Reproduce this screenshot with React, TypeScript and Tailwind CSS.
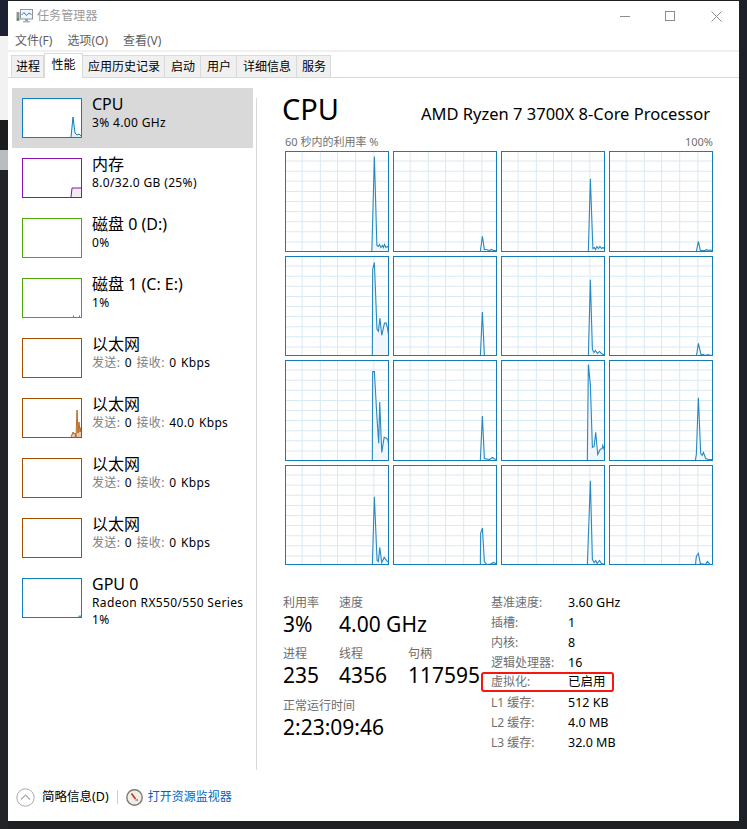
const FONT = '"Noto Sans", "Noto Sans CJK SC", sans-serif';

type P = [number, number];

const CORES: P[][] = [
  [[86.5,100],[89,6],[91.5,94],[93,95],[94,93],[95.5,96],[97,94],[98,96],[99,93],[100.5,96],[102,95],[104,97]],
  [[87,100],[89,85],[91,98],[93,98],[96,99],[98,98],[100,99],[104,99]],
  [[87,100],[89,28],[91.5,97],[93,96],[94,98],[95.5,95],[97,97],[98.5,95],[100,97],[101.5,96],[104,98]],
  [[87,100],[89,90],[91,99],[94,99],[96,99],[97,98],[99,99],[101,98.5],[104,99]],
  [[87,100],[87.3,14],[89,7],[91.6,73],[93,75],[94.5,62],[96.3,79],[99,67],[100.7,67],[102,72],[104,84]],
  [[87,100],[89,56],[91,99],[93,99],[104,99]],
  [[87,100],[89,24],[91,93],[92.5,96],[94,94],[96,97],[98,95],[100,97],[102,98],[104,99]],
  [[87,100],[89,87],[91.6,98],[94,98],[96,99],[98,98],[100,98.5],[104,99]],
  [[87,100],[87.3,12],[89,12],[91.6,58],[93.3,83],[94.3,42],[96.3,92],[98.7,77],[101,78],[102.5,80],[104,92]],
  [[87,100],[89,56],[91,98],[96,99],[99,97],[101,98.5],[104,99]],
  [[86,100],[87,5],[89,25],[91,87],[92.7,86],[94.3,72],[96.3,94],[98.7,89],[100.7,88],[101.3,85],[104,93]],
  [[86,100],[87,94],[89,38],[91.3,93],[92.7,95],[94,92],[96.3,98],[99,99],[104,99]],
  [[87,100],[89,32],[91.7,95],[93,96],[94.3,82],[96.3,97],[98.7,92],[101,95],[104,98]],
  [[87,100],[87.3,68],[89,63],[91,96],[93.3,99],[97,98.5],[100,97],[104,99]],
  [[86,100],[89,16],[91,94],[92.7,97],[94.3,95],[95.7,98],[98,95],[100,98],[104,99]],
  [[86,100],[87,91],[89,88],[91,98],[96,99],[98,96],[100.7,99],[104,99]],
];

const VLINES = [17.5, 35.5, 52.5, 70.5, 88.5];
const HLINES = [10.5, 20.5, 30.5, 40.5, 50.5, 60.5, 70.5, 80.5, 90.5];

function CoreGraph({ pts }: { pts: P[] }) {
  const line = pts.map((p) => p.join(",")).join(" ");
  return (
    <div className="border-[1.5px] border-[#117dbb] bg-white overflow-hidden">
      <svg viewBox="1.5 1.5 101 97.5" preserveAspectRatio="none" className="block w-full h-full">
        {VLINES.map((x) => (
          <line key={x} x1={x} x2={x} y1={0} y2={100} stroke="#d9eaf4" strokeWidth={1} />
        ))}
        {HLINES.map((y) => (
          <line key={y} x1={0} x2={104} y1={y} y2={y} stroke="#d9eaf4" strokeWidth={1} />
        ))}
        <polygon points={`${line} 104,100`} fill="#f1f6fa" />
        <polyline points={line} fill="none" stroke="#117dbb" strokeWidth={1.1} strokeOpacity={0.9} />
      </svg>
    </div>
  );
}

function Thumb({ color, children }: { color: string; children?: React.ReactNode }) {
  return (
    <div
      className="w-[60px] h-[40px] shrink-0 border-[1px] bg-white overflow-hidden"
      style={{ borderColor: color }}
    >
      <svg viewBox="0 0 58 38" className="block w-[58px] h-[38px]">
        {children}
      </svg>
    </div>
  );
}

function SideItem({
  selected,
  color,
  title,
  lines,
  graph,
}: {
  selected?: boolean;
  color: string;
  title: string;
  lines: React.ReactNode[];
  graph?: React.ReactNode;
}) {
  return (
    <div className={`h-[60px] flex items-start pl-[10px] pt-[10px] ${selected ? "bg-[#d9d9d9]" : ""}`}>
      <Thumb color={color}>{graph}</Thumb>
      <div className="ml-[10px] -mt-[4px] text-[#000]">
        <div className="text-[16px] leading-[20px] whitespace-nowrap">{title}</div>
        {lines.map((l, i) => (
          <div key={i} className="text-[12px] leading-[17px] whitespace-nowrap tracking-[0.35px]">
            {l}
          </div>
        ))}
      </div>
    </div>
  );
}

const NetLine = ({ rx }: { rx: string }) => (
  <span className="[word-spacing:1px]">
    <span className="text-[#808080]">发送:</span> 0 <span className="text-[#808080]">接收:</span> {rx}
  </span>
);

const TABS: [string, string][] = [
  ["进程", "w-[33px]"],
  ["性能", "w-[39px]"],
  ["应用历史记录", "w-[82px]"],
  ["启动", "w-[36px]"],
  ["用户", "w-[36px]"],
  ["详细信息", "w-[60px]"],
  ["服务", "w-[34px]"],
];

function Stat({ label, value, className }: { label: string; value: string; className: string }) {
  return (
    <div className={className}>
      <div className="text-[12px] leading-[17px] text-[#6d6d6d] whitespace-nowrap">{label}</div>
      <div className="text-[21px] leading-[26px] whitespace-nowrap text-black">{value}</div>
    </div>
  );
}

const SPECS: [string, string, boolean?][] = [
  ["基准速度:", "3.60 GHz"],
  ["插槽:", "1"],
  ["内核:", "8"],
  ["逻辑处理器:", "16"],
  ["虚拟化:", "已启用", true],
  ["L1 缓存:", "512 KB"],
  ["L2 缓存:", "4.0 MB"],
  ["L3 缓存:", "32.0 MB"],
];

export default function App() {
  return (
    <div className="w-[747px] h-[829px] bg-[#1f2023] flex overflow-hidden" style={{ fontFamily: FONT }}>
      <div className="w-[8px] shrink-0 flex flex-col">
        <div className="h-[36px] bg-[#1c2030]" />
        <div className="h-[84px] bg-[#f2f2f2]" />
        <div className="h-[30px] bg-[#1c1c1e]" />
        <div className="h-[20px] bg-[#b9bcc0]" />
        <div className="flex-1 bg-[#232427]" />
      </div>

      <div className="w-[731px] h-[820px] mt-[1px] bg-white flex flex-col shrink-0">
        {/* title bar */}
        <div className="h-[30px] flex items-center pl-[8px] shrink-0">
          <svg width="17" height="16" viewBox="0 0 17 16" className="shrink-0">
            <rect x="0.5" y="4" width="3" height="9" fill="#8f9499" />
            <rect x="1" y="10" width="2" height="2" fill="#3f9b4a" />
            <rect x="4.5" y="1.5" width="12" height="9.5" fill="#eef5fb" stroke="#8e9499" />
            <path d="M5.5 7 L8 4.5 L10.5 7.5 L13 5 L15.5 6.5" fill="none" stroke="#2f7fc4" strokeWidth="1" />
            <rect x="9" y="11" width="3" height="2" fill="#9aa0a5" />
            <rect x="7" y="13" width="7" height="1.5" fill="#b0b4b8" />
          </svg>
          <span className="ml-[4px] text-[12px] text-[#9a9a9a] tracking-[0.1px]">任务管理器</span>
          <div className="flex-1" />
          <svg width="10" height="10" viewBox="0 0 10 10" className="mr-[35px]">
            <line x1="0" x2="10" y1="5.5" y2="5.5" stroke="#8c8c8c" />
          </svg>
          <svg width="10" height="10" viewBox="0 0 10 10" className="mr-[36px]">
            <rect x="0.5" y="0.5" width="9" height="9" fill="none" stroke="#8c8c8c" />
          </svg>
          <svg width="11" height="11" viewBox="0 0 11 11" className="mr-[17px]">
            <path d="M0.5 0.5 L10.5 10.5 M10.5 0.5 L0.5 10.5" stroke="#8c8c8c" fill="none" />
          </svg>
        </div>

        {/* menu */}
        <div className="h-[19px] flex items-center pl-[7px] gap-[15px] text-[12px] text-[#5e5e5e] shrink-0">
          <span>文件(F)</span>
          <span>选项(O)</span>
          <span>查看(V)</span>
        </div>
        <div className="h-[2px] bg-[#f0f0f0] shrink-0" />

        {/* tabs */}
        <div className="h-[26px] flex items-end pl-[3px] border-b border-[#d9d9d9] shrink-0 text-[12px] text-black">
          {TABS.map(([t, w]) => {
            const active = t === "性能";
            return (
              <div
                key={t}
                className={
                  active
                    ? `${w} h-[25px] -mb-[1px] bg-white border border-b-0 border-[#d9d9d9] flex items-center justify-center pb-[2px]`
                    : `${w} h-[22px] pl-[1px] bg-[#f0f0f0] border-t border-r border-[#d9d9d9] first:border-l flex items-center justify-center`
                }
              >
                {t}
              </div>
            );
          })}
        </div>

        {/* content */}
        <div className="flex-1 flex min-h-0">
          <div className="w-[245px] shrink-0 pl-[4px] pt-[10px]">
            <SideItem
              selected
              color="#117dbb"
              title="CPU"
              lines={["3% 4.00 GHz"]}
              graph={
                <>
                  <polygon points="48,38 50,18 52,34 54,36 56,35 58,37 58,38" fill="#e8f1f8" />
                  <polyline points="48,38 50,18 52,34 54,36 56,35 58,37" fill="none" stroke="#117dbb" strokeWidth="1" />
                </>
              }
            />
            <SideItem
              color="#8b12ae"
              title="内存"
              lines={["8.0/32.0 GB (25%)"]}
              graph={
                <>
                  <polygon points="48,38 49,29 58,29 58,38" fill="#f1ebf5" />
                  <polyline points="48,38 49,29 58,29" fill="none" stroke="#8b12ae" strokeWidth="1" />
                </>
              }
            />
            <SideItem color="#4da60c" title="磁盘 0 (D:)" lines={["0%"]} />
            <SideItem
              color="#4da60c"
              title="磁盘 1 (C: E:)"
              lines={["1%"]}
              graph={
                <path d="M50.5 38 V36.5 M56.5 38 V36.5" stroke="#4da60c" strokeWidth="1" fill="none" />
              }
            />
            <SideItem color="#a74f01" title="以太网" lines={[<NetLine rx="0 Kbps" />]} />
            <SideItem
              color="#a74f01"
              title="以太网"
              lines={[<NetLine rx="40.0 Kbps" />]}
              graph={
                <>
                  <polygon points="48,38 50,33 51,35 52,34 53,38 54,11 55,34 56,23 57,33 58,28 58,38" fill="#e9c6a8" />
                  <polyline points="48,38 50,33 51,35 52,34 53,38 54,11 55,34 56,23 57,33 58,28" fill="none" stroke="#a74f01" strokeWidth="0.8" />
                </>
              }
            />
            <SideItem color="#a74f01" title="以太网" lines={[<NetLine rx="0 Kbps" />]} />
            <SideItem color="#a74f01" title="以太网" lines={[<NetLine rx="0 Kbps" />]} />
            <SideItem
              color="#117dbb"
              title="GPU 0"
              lines={["Radeon RX550/550 Series", "1%"]}
              graph={<path d="M55 38 L56 36.5 L58 36.5 L58 38 Z" fill="#117dbb" opacity="0.7" />}
            />
          </div>

          <div className="w-px bg-[#d9d9d9] ml-[3px] mt-[20px] shrink-0" />

          {/* main */}
          <div className="flex-1 pl-[25px] flex flex-col">
            <div className="h-[37px] mt-[12px] w-[428px] flex items-end justify-between shrink-0">
              <span className="text-[29px] leading-[37px] text-black">CPU</span>
              <span className="text-[16.5px] leading-[24px] text-black mb-[1px] whitespace-nowrap">
                AMD Ryzen 7 3700X 8-Core Processor
              </span>
            </div>
            <div className="w-[428px] mt-[6px] h-[18px] flex items-center justify-between text-[11px] text-[#707070] whitespace-nowrap ml-[3px]">
              <span>60 秒内的利用率 %</span>
              <span>100%</span>
            </div>
            <div className="ml-[3px] w-[428px] h-[414px] grid grid-cols-4 grid-rows-4 gap-[4px] shrink-0">
              {CORES.map((pts, i) => (
                <CoreGraph key={i} pts={pts} />
              ))}
            </div>

            <div className="flex mt-[29px] ml-[1px]">
              <div className="w-[208px] shrink-0">
                <div className="flex">
                  <Stat label="利用率" value="3%" className="w-[56px]" />
                  <Stat label="速度" value="4.00 GHz" className="" />
                </div>
                <div className="flex mt-[8px]">
                  <Stat label="进程" value="235" className="w-[56px]" />
                  <Stat label="线程" value="4356" className="w-[69px]" />
                  <Stat label="句柄" value="117595" className="" />
                </div>
                <Stat label="正常运行时间" value="2:23:09:46" className="mt-[9px]" />
              </div>
              <div className="flex flex-col -mt-[1px]">
                {SPECS.map(([k, v, mark]) =>
                  mark ? (
                    <div
                      key={k}
                      className="h-[20px] w-[133px] -mt-[1px] mb-[1px] -ml-[10px] pl-[8px] flex items-center text-[12px] whitespace-nowrap border-[2px] border-[#f8160f] rounded-[3px]"
                    >
                      <span className="text-[#707070] w-[77px]">{k}</span>
                      <span className="text-black text-[12.5px]">{v}</span>
                    </div>
                  ) : (
                    <div key={k} className="h-[20px] flex items-center text-[12px] whitespace-nowrap">
                      <span className="text-[#707070] w-[77px]">{k}</span>
                      <span className="text-black text-[12.5px]">{v}</span>
                    </div>
                  ),
                )}
              </div>
            </div>
          </div>
        </div>

        {/* footer */}
        <div className="h-[51px] flex items-center pl-[8px] pt-[3px] shrink-0 text-[12px]">
          <svg width="19" height="19" viewBox="0 0 19 19" className="shrink-0">
            <circle cx="9.5" cy="9.5" r="8.7" fill="none" stroke="#a9a9a9" strokeWidth="1" />
            <path d="M5 11.5 L9.5 7 L14 11.5" fill="none" stroke="#a9a9a9" strokeWidth="1.2" />
          </svg>
          <span className="ml-[7px] text-black text-[12.5px]">简略信息(D)</span>
          <div className="w-px h-[14px] bg-[#cfcfcf] ml-[8px]" />
          <svg width="17" height="17" viewBox="0 0 17 17" className="ml-[8px] shrink-0">
            <circle cx="8.5" cy="8.5" r="7.7" fill="#f0eee6" stroke="#7d7a70" strokeWidth="1.4" />
            <path d="M5.5 4.5 L9.5 10" stroke="#c8322a" strokeWidth="1.6" fill="none" />
            <path d="M9.5 11 H12" stroke="#555" strokeWidth="1" fill="none" />
          </svg>
          <span className="ml-[5px] text-[#0a5fbd]">打开资源监视器</span>
        </div>
      </div>

      <div className="flex-1 bg-[#1e2028]" />
    </div>
  );
}
